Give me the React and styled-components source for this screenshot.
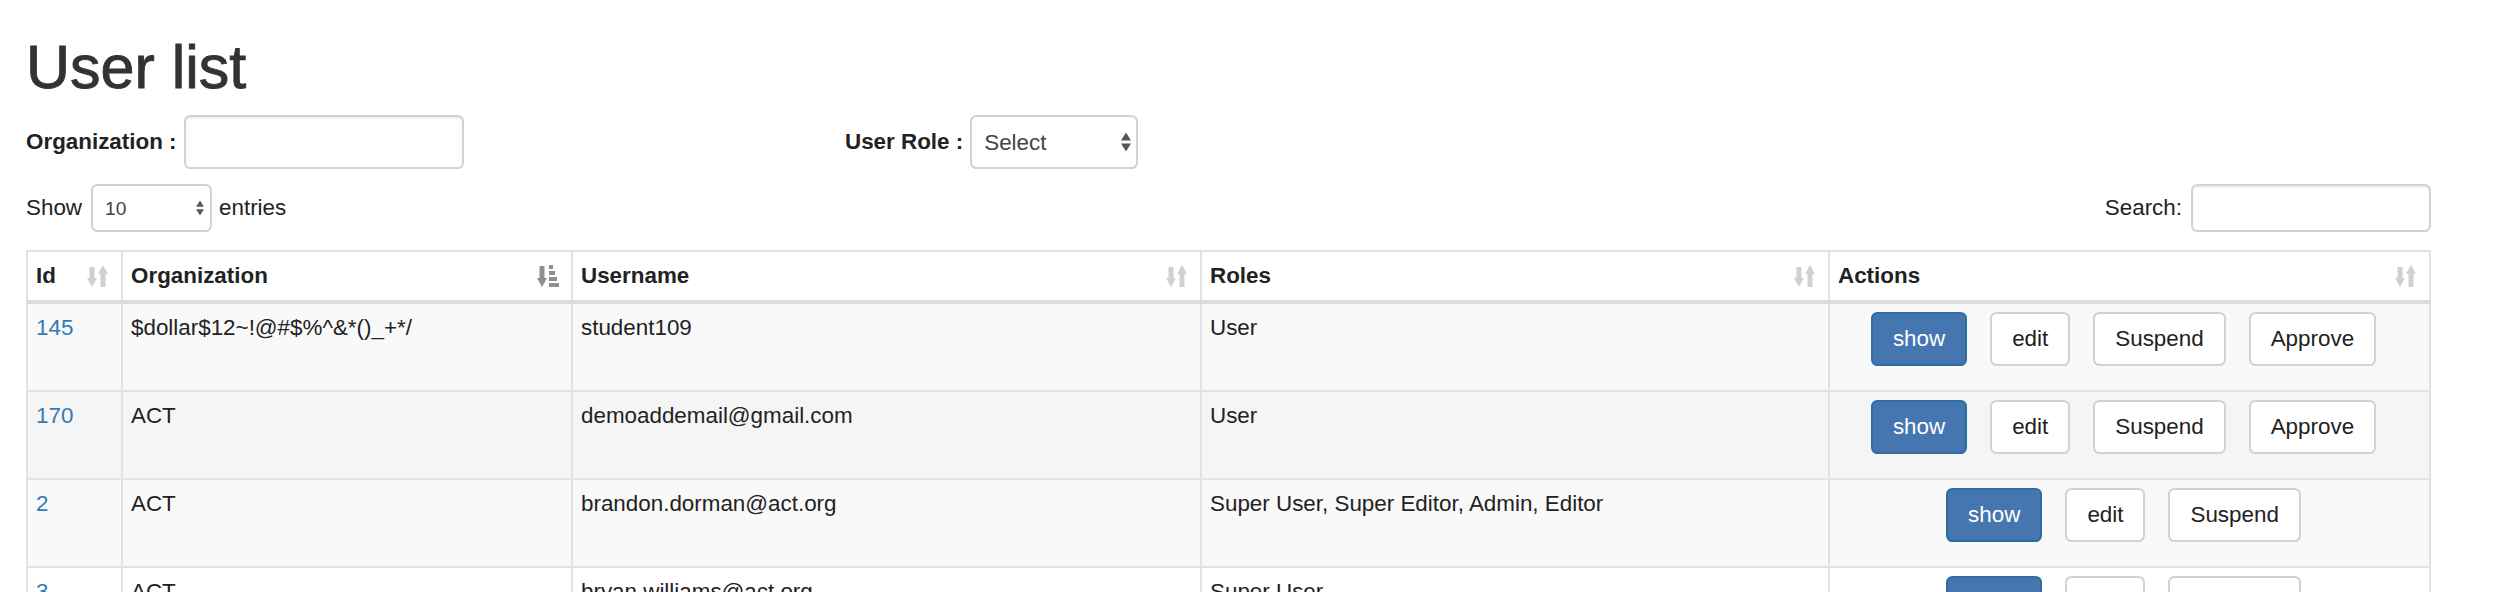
import React from "react";
import styled, { createGlobalStyle } from "styled-components";

const GlobalStyle = createGlobalStyle`
  html, body { margin: 0; padding: 0; background: #fff; }
  body {
    font-family: "Liberation Sans", Helvetica, Arial, sans-serif;
    font-size: 22.4px;
    line-height: 32px;
    color: #333;
  }
  * { box-sizing: border-box; }
`;

const Page = styled.div`
  padding: 34px 69px 0 26px;
`;

const Title = styled.h1`
  margin: 0 0 15px;
  font-size: 61px;
  line-height: 66px;
  font-weight: 400;
  color: #333;
  -webkit-text-stroke: 0.9px #333;
`;

const FilterRow = styled.div`
  display: flex;
  align-items: center;
  height: 54px;
`;

const FilterGroup = styled.div`
  display: flex;
  align-items: center;
  width: ${(p) => (p.$width ? `${p.$width}px` : "auto")};
`;

const BoldLabel = styled.label`
  font-weight: 700;
  color: #222;
  margin-right: 7px;
`;

const TextInput = styled.input`
  width: ${(p) => p.$width}px;
  height: ${(p) => p.$height}px;
  border: 2px solid #d2d2d2;
  border-radius: 6.4px;
  background: #fff;
  box-shadow: inset 0 1.6px 1.6px rgba(0, 0, 0, 0.075);
  padding: 0 14px;
  font: inherit;
  outline: none;
`;

const SelectWrap = styled.div`
  position: relative;
  display: inline-block;
  margin: ${(p) => p.$margin || "0"};
`;

const NativeSelect = styled.select`
  appearance: none;
  -webkit-appearance: none;
  width: ${(p) => p.$width}px;
  height: ${(p) => p.$height}px;
  border: 2px solid #d2d2d2;
  border-radius: 6.4px;
  background: #fff;
  padding: 0 0 0 12px;
  font-family: "Liberation Sans", Helvetica, Arial, sans-serif;
  font-size: ${(p) => p.$fontSize}px;
  color: #444;
  outline: none;
`;

const SelectArrows = styled.svg`
  position: absolute;
  right: ${(p) => p.$right}px;
  top: 50%;
  transform: translateY(-50%);
  pointer-events: none;
`;

const ControlsRow = styled.div`
  display: flex;
  align-items: center;
  justify-content: space-between;
  height: 48px;
  margin-top: 15px;
`;

const InlineGroup = styled.div`
  display: flex;
  align-items: center;
`;

const PlainLabel = styled.span`
  color: #222;
  margin-right: ${(p) => p.$mr || 0}px;
`;

const Table = styled.table`
  width: 2405px;
  margin-top: 18px;
  border-collapse: collapse;
  table-layout: fixed;
  border: 2px solid #e2e2e2;
`;

const Th = styled.th`
  text-align: left;
  font-weight: 700;
  color: #222;
  padding: 8px;
  border: 2px solid #e2e2e2;
  border-bottom: 4px solid #dcdcdc;
  background: #fff;
  width: ${(p) => (p.$width ? `${p.$width}px` : "auto")};
`;

const HeadInner = styled.div`
  display: flex;
  align-items: center;
  justify-content: space-between;
`;

const SortIcon = styled.svg`
  margin-right: 4px;
  flex: none;
`;

const Tr = styled.tr`
  background: ${(p) => p.$bg};
`;

const Td = styled.td`
  vertical-align: top;
  padding: 8px;
  border: 2px solid #e2e2e2;
  color: #222;
  white-space: nowrap;
  overflow: hidden;
`;

const IdLink = styled.a`
  color: #337ab7;
  text-decoration: none;
`;

const ActionBar = styled.div`
  display: flex;
  justify-content: center;
  gap: 23px;
  padding: 0 12px 16px 0;
`;

const Button = styled.button`
  height: 54px;
  padding: 9px 20px;
  border-radius: 6.4px;
  font-family: "Liberation Sans", Helvetica, Arial, sans-serif;
  font-size: 22.4px;
  line-height: 32px;
  border: 2px solid ${(p) => (p.$primary ? "#2e6da4" : "#d2d2d2")};
  background: ${(p) => (p.$primary ? "#4576b0" : "#fff")};
  color: ${(p) => (p.$primary ? "#fff" : "#222")};
  cursor: pointer;
`;

function Arrows({ w, h, right }) {
  return (
    <SelectArrows $right={right} width={w} height={h} viewBox="0 0 10 19">
      <polygon points="5,0 10,8 0,8" fill="#555" />
      <polygon points="0,11 10,11 5,19" fill="#555" />
    </SelectArrows>
  );
}

function SortBoth() {
  return (
    <SortIcon width="22" height="24" viewBox="0 0 22 24">
      <g fill="#d0d0d0">
        <rect x="2.5" y="3" width="5" height="12" />
        <polygon points="0,14 10,14 5,23" />
        <polygon points="11,10 21,10 16,1" />
        <rect x="13.5" y="9" width="5" height="14" />
      </g>
    </SortIcon>
  );
}

function SortAsc() {
  return (
    <SortIcon width="22" height="24" viewBox="0 0 22 24">
      <g fill="#8f8f8f">
        <rect x="2.5" y="2" width="5" height="13" />
        <polygon points="0,14 10,14 5,23" />
        <rect x="12" y="1" width="4" height="4" />
        <rect x="12" y="7" width="6" height="4" />
        <rect x="12" y="13" width="8" height="4" />
        <rect x="12" y="19" width="10" height="4" />
      </g>
    </SortIcon>
  );
}

const columns = [
  { label: "Id", width: 95, sort: "both" },
  { label: "Organization", width: 450, sort: "asc" },
  { label: "Username", width: 629, sort: "both" },
  { label: "Roles", width: 628, sort: "both" },
  { label: "Actions", width: null, sort: "both" },
];

const rows = [
  {
    id: "145",
    org: "$dollar$12~!@#$%^&*()_+*/",
    user: "student109",
    roles: "User",
    approve: true,
    bg: "#f9f9f9",
  },
  {
    id: "170",
    org: "ACT",
    user: "demoaddemail@gmail.com",
    roles: "User",
    approve: true,
    bg: "#f5f5f5",
  },
  {
    id: "2",
    org: "ACT",
    user: "brandon.dorman@act.org",
    roles: "Super User, Super Editor, Admin, Editor",
    approve: false,
    bg: "#f9f9f9",
  },
  {
    id: "3",
    org: "ACT",
    user: "bryan.williams@act.org",
    roles: "Super User",
    approve: false,
    bg: "#ffffff",
  },
];

export default function App() {
  return (
    <>
      <GlobalStyle />
      <Page>
        <Title>User list</Title>
        <FilterRow>
          <FilterGroup $width={819}>
            <BoldLabel>Organization :</BoldLabel>
            <TextInput type="text" $width={280} $height={54} />
          </FilterGroup>
          <FilterGroup>
            <BoldLabel>User Role :</BoldLabel>
            <SelectWrap>
              <NativeSelect $width={168} $height={54} $fontSize={22.4} defaultValue="">
                <option value="">Select</option>
                <option value="user">User</option>
                <option value="admin">Admin</option>
              </NativeSelect>
              <Arrows w={10} h={19} right={7} />
            </SelectWrap>
          </FilterGroup>
        </FilterRow>
        <ControlsRow>
          <InlineGroup>
            <PlainLabel>Show</PlainLabel>
            <SelectWrap $margin="0 7px 0 9px">
              <NativeSelect $width={121} $height={48} $fontSize={19.2} defaultValue="10">
                <option value="10">10</option>
                <option value="25">25</option>
                <option value="50">50</option>
              </NativeSelect>
              <Arrows w={8} h={15} right={8} />
            </SelectWrap>
            <PlainLabel>entries</PlainLabel>
          </InlineGroup>
          <InlineGroup>
            <PlainLabel $mr={9}>Search:</PlainLabel>
            <TextInput type="search" $width={240} $height={48} />
          </InlineGroup>
        </ControlsRow>
        <Table>
          <thead>
            <tr>
              {columns.map((c) => (
                <Th key={c.label} $width={c.width}>
                  <HeadInner>
                    <span>{c.label}</span>
                    {c.sort === "asc" ? <SortAsc /> : <SortBoth />}
                  </HeadInner>
                </Th>
              ))}
            </tr>
          </thead>
          <tbody>
            {rows.map((r) => (
              <Tr key={r.id} $bg={r.bg}>
                <Td>
                  <IdLink href="#">{r.id}</IdLink>
                </Td>
                <Td>{r.org}</Td>
                <Td>{r.user}</Td>
                <Td>{r.roles}</Td>
                <Td>
                  <ActionBar>
                    <Button $primary>show</Button>
                    <Button>edit</Button>
                    <Button>Suspend</Button>
                    {r.approve && <Button>Approve</Button>}
                  </ActionBar>
                </Td>
              </Tr>
            ))}
          </tbody>
        </Table>
      </Page>
    </>
  );
}
